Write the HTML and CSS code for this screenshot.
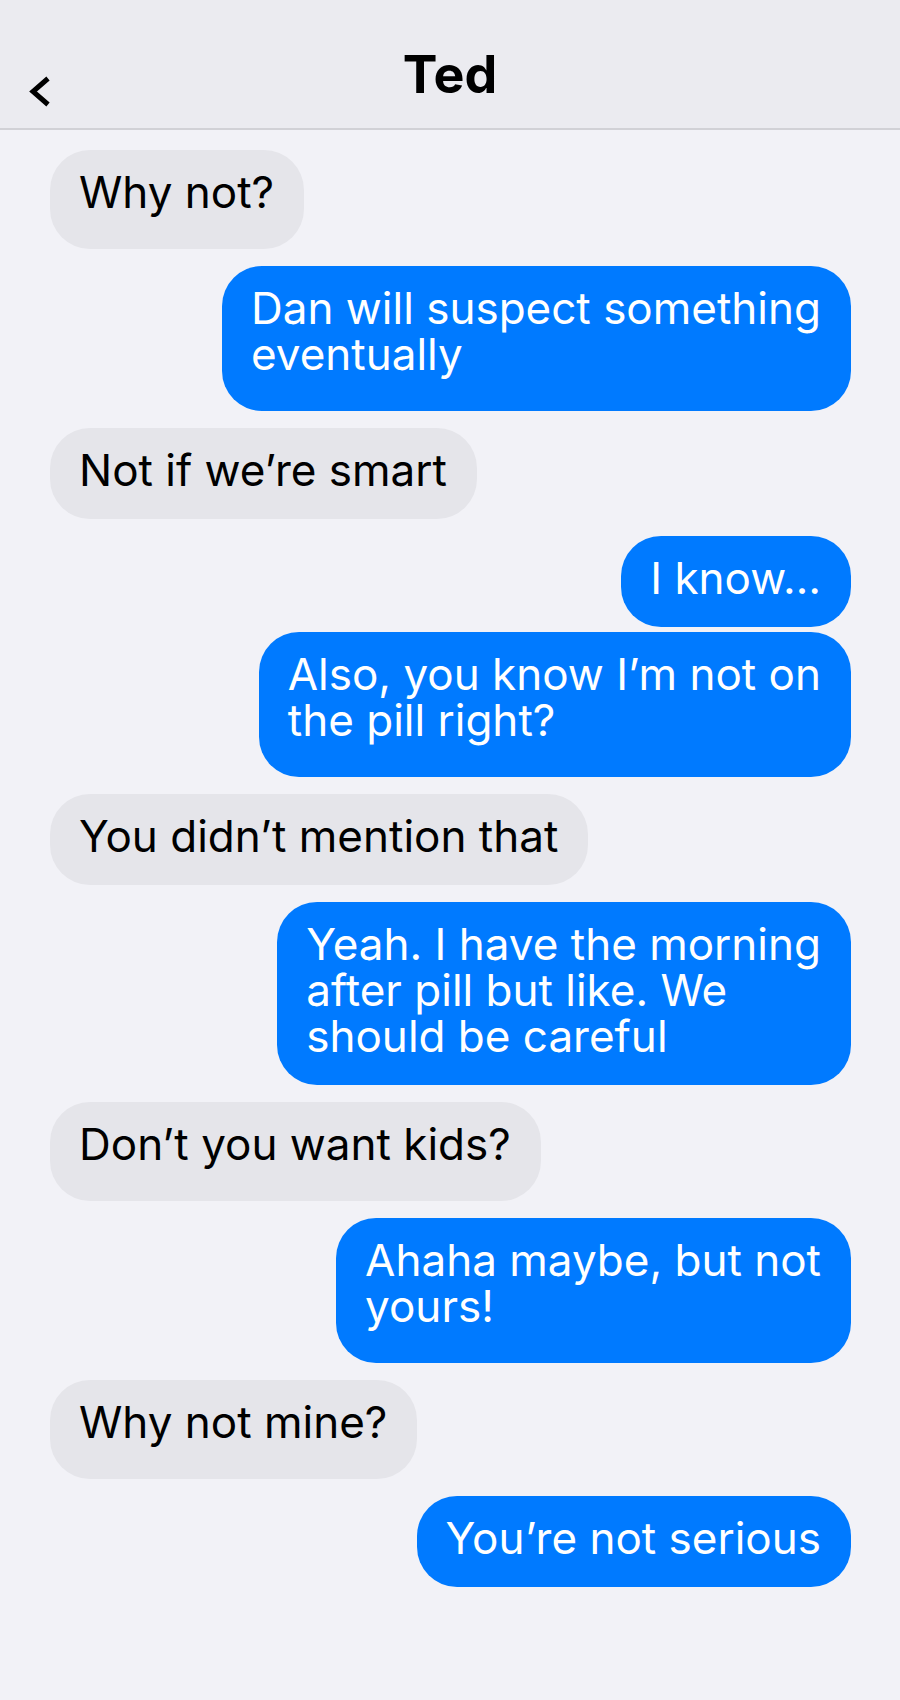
FILE: index.html
```html
<!DOCTYPE html>
<html>
<head>
    <title>Ted</title>
    <meta charset="UTF-8">
    <meta name="viewport" content="width=device-width, initial-scale=1.0">
    <link rel="stylesheet" href="styles.css">
</head>
<body>
    <header class="topbar">
        <a class="back" href="#" aria-label="Back">
            <svg width="24" height="31" viewBox="0 0 24 31">
                <polyline points="22,2.5 7,15.5 22,28.5" fill="none" stroke="#000" stroke-width="5" stroke-linejoin="miter"/>
            </svg>
        </a>
        <h1 class="title">Ted</h1>
        <span></span>
    </header>

    <main class="thread">
        <div class="msg in desc">Why not?</div>
        <div class="msg out desc">Dan will suspect something<br>eventually</div>
        <div class="msg in">Not if we’re smart</div>
        <div class="msg out">I know…</div>
        <div class="msg out desc">Also, you know I’m not on<br>the pill right?</div>
        <div class="msg in">You didn’t mention that</div>
        <div class="msg out">Yeah. I have the morning<br>after pill but like. We<br>should be careful</div>
        <div class="msg in desc">Don’t you want kids?</div>
        <div class="msg out desc">Ahaha maybe, but not<br>yours!</div>
        <div class="msg in desc">Why not mine?</div>
        <div class="msg out">You’re not serious</div>
    </main>
</body>
</html>
```

FILE: styles.css
```css
:root {
    --blue: #007AFF;
    --gray: #E5E5EA;
    --bg: #F2F2F7;
    --bar: #EBEBF0;
    --line: #D1D1D6;
}

body {
    margin: 0;
    background: var(--bg);
    font-family: Inter, "Noto Sans", sans-serif;
    color: #000;
}

/* top navigation bar */
.topbar {
    display: grid;
    grid-template-columns: 1fr auto 1fr;
    align-items: start;
    height: 83px;
    padding-top: 45px;
    background: var(--bar);
    border-bottom: 2px solid var(--line);
}

.back {
    display: block;
    width: 24px;
    height: 31px;
    margin: 31px 0 0 26px;
}

.back svg {
    display: block;
}

.title {
    margin: 0;
    font-size: 52px;
    line-height: 60px;
    font-weight: 700;
}

/* messages */
.thread {
    display: flex;
    flex-direction: column;
    align-items: flex-start;
    padding: 20px 49px 40px 50px;
}

.msg {
    box-sizing: border-box;
    padding: 19px 30px 26px 29px;
    margin-top: 17px;
    border-radius: 40px;
    font-size: 44px;
    line-height: 46px;
    white-space: nowrap;
}

.msg:first-child {
    margin-top: 0;
}

.msg.desc {
    padding-bottom: 34px;
}

.msg.in {
    background: var(--gray);
    color: #000;
}

.msg.out {
    align-self: flex-end;
    background: var(--blue);
    color: #fff;
}

.msg.out + .msg.out {
    margin-top: 5px;
}
```
